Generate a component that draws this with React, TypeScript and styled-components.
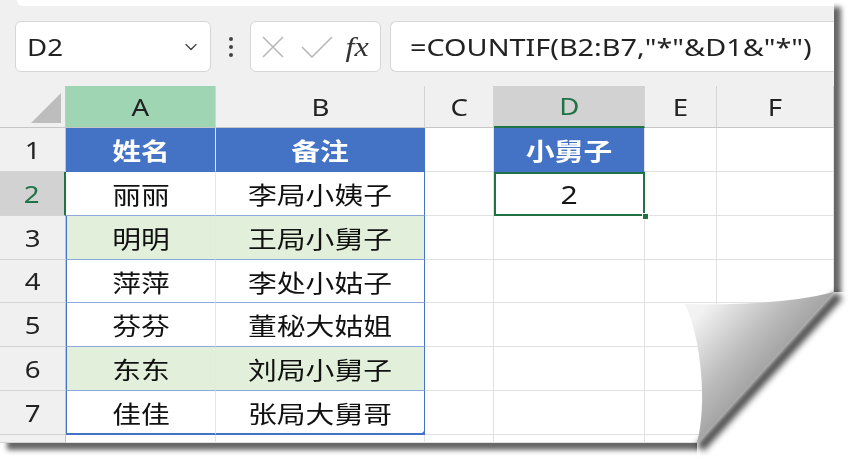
import React from "react";
import styled, { createGlobalStyle } from "styled-components";
import { ChevronDown } from "lucide-react";

const GlobalStyle = createGlobalStyle`
  html, body {
    margin: 0;
    padding: 0;
    background: #fff;
  }
  body {
    font-family: "Noto Sans", "Noto Sans CJK SC", sans-serif;
    color: #1f1f1f;
  }
`;

const green = "#217346";
const blue = "#4472c4";
const grid = "#e1e1e1";

const Page = styled.div`
  position: relative;
  width: 858px;
  height: 467px;
  overflow: hidden;
  background: #fff;
`;

const Sheet = styled.div`
  width: 834px;
  display: flex;
  flex-direction: column;
  background: #fff;
  box-shadow: 7px 7px 5px rgba(0, 0, 0, 0.6);
`;

const Toolbar = styled.div`
  height: 86px;
  background: #f0f0f0;
  display: flex;
  flex-direction: column;
`;

const RibbonEdge = styled.div`
  height: 6px;
  margin-left: 17px;
  background: #fff;
  border-radius: 0 0 0 8px;
`;

const FormulaRow = styled.div`
  display: flex;
  align-items: stretch;
  height: 51px;
  margin-top: 15px;
  padding-left: 15px;
`;

const Box = styled.div`
  box-sizing: border-box;
  background: #fff;
  border: 1px solid #d6d6d6;
  border-radius: 6px;
  display: flex;
  align-items: center;
`;

const NameBox = styled(Box)`
  width: 196px;
  justify-content: space-between;
  padding: 0 9px 0 11px;
  font-size: 23px;
  color: #222;
`;

const Dots = styled.div`
  width: 39px;
  display: flex;
  flex-direction: column;
  align-items: center;
  justify-content: center;
  gap: 4px;
  span {
    width: 4px;
    height: 4px;
    border-radius: 50%;
    background: #444;
  }
`;

const FxBox = styled(Box)`
  width: 131px;
  padding-left: 11px;
`;

const Fx = styled.span`
  font-family: "Liberation Serif", serif;
  font-style: italic;
  font-size: 28px;
  color: #333;
  margin-left: 14px;
  display: inline-block;
  transform: scaleX(1.15);
`;

const FormulaBox = styled(Box)`
  flex: 1;
  margin-left: 9px;
  border-right: none;
  border-radius: 6px 0 0 6px;
  padding-left: 19px;
  font-size: 24px;
  color: #222;
`;

const Wide = styled.span<{ $origin?: string }>`
  display: inline-block;
  white-space: nowrap;
  transform: scaleX(1.2);
  transform-origin: ${(p) => p.$origin ?? "center"};
`;

const Grid = styled.div`
  display: grid;
  grid-template-columns: 66px 150px 209px 69px 151px 72px 117px;
  grid-template-rows: 42px 44px 44px 44px 43px 44px 44px 44px 8px;
`;

const Head = styled.div<{ $bg?: string; $color?: string; $mark?: boolean }>`
  box-sizing: border-box;
  display: flex;
  align-items: center;
  justify-content: center;
  background: ${(p) => p.$bg ?? "#f0f0f0"};
  color: ${(p) => p.$color ?? "#222"};
  font-size: 23px;
  border-right: 1px solid #d4d4d4;
  border-bottom: ${(p) => (p.$mark ? `2px solid ${green}` : "1px solid #c6c6c6")};
`;

const RowHead = styled.div<{ $selected?: boolean }>`
  box-sizing: border-box;
  display: flex;
  align-items: center;
  justify-content: center;
  background: ${(p) => (p.$selected ? "#d2d2d2" : "#f0f0f0")};
  color: ${(p) => (p.$selected ? green : "#222")};
  font-size: 23px;
  border-bottom: 1px solid #d4d4d4;
  border-right: ${(p) => (p.$selected ? `2px solid ${green}` : "1px solid #c6c6c6")};
`;

const Corner = styled.div`
  position: relative;
  background: #f0f0f0;
  border-right: 1px solid #c6c6c6;
  border-bottom: 1px solid #c6c6c6;
  box-sizing: border-box;
  &::after {
    content: "";
    position: absolute;
    right: 4px;
    bottom: 4px;
    width: 30px;
    height: 30px;
    background: #bdbdbd;
    clip-path: polygon(100% 0, 100% 100%, 0 100%);
  }
`;

const Cell = styled.div`
  box-sizing: border-box;
  border-right: 1px solid ${grid};
  border-bottom: 1px solid ${grid};
  background: #fff;
`;

const TableCell = styled.div<{
  $fill?: string;
  $head?: boolean;
  $left?: boolean;
  $right?: boolean;
  $last?: boolean;
}>`
  position: relative;
  box-sizing: border-box;
  display: flex;
  align-items: center;
  justify-content: center;
  font-size: 24px;
  font-family: "Noto Sans CJK SC", "Noto Sans", sans-serif;
  background: ${(p) => (p.$head ? blue : p.$fill ?? "#fff")};
  color: ${(p) => (p.$head ? "#fff" : "#111")};
  font-weight: ${(p) => (p.$head ? 700 : 400)};
  border-left: ${(p) => (p.$left ? `1px solid ${blue}` : "none")};
  border-right: ${(p) => (p.$right ? `1px solid ${blue}` : "1px solid #e6e6e6")};
  border-bottom: ${(p) =>
    p.$head ? `1px solid ${blue}` : p.$last ? `2px solid ${blue}` : "1px solid #8ea9db"};
`;

const ActiveCell = styled.div`
  position: relative;
  box-sizing: border-box;
  display: flex;
  align-items: center;
  justify-content: center;
  font-size: 25px;
  color: #161616;
  box-shadow: inset 0 0 0 2px ${green};
  &::after {
    content: "";
    position: absolute;
    right: -4px;
    bottom: -4px;
    width: 7px;
    height: 7px;
    background: ${green};
    border: 1px solid #fff;
    box-sizing: border-box;
  }
`;

const ResizeMark = styled.span`
  position: absolute;
  right: -1px;
  bottom: -2px;
  width: 5px;
  height: 5px;
  background: ${blue};
  clip-path: polygon(100% 0, 100% 100%, 0 100%);
`;

const Curl = styled.svg`
  position: absolute;
  left: 0;
  top: 0;
  width: 858px;
  height: 467px;
  pointer-events: none;
`;

type Row = { n: number; a: string; b: string; d?: string; fill?: string };

const rows: Row[] = [
  { n: 1, a: "姓名", b: "备注", d: "小舅子" },
  { n: 2, a: "丽丽", b: "李局小姨子", d: "2" },
  { n: 3, a: "明明", b: "王局小舅子", fill: "#e2efda" },
  { n: 4, a: "萍萍", b: "李处小姑子" },
  { n: 5, a: "芬芬", b: "董秘大姑姐" },
  { n: 6, a: "东东", b: "刘局小舅子", fill: "#e2efda" },
  { n: 7, a: "佳佳", b: "张局大舅哥" },
];

export default function App() {
  return (
    <Page>
      <GlobalStyle />
      <Sheet>
        <Toolbar>
          <RibbonEdge />
          <FormulaRow>
            <NameBox>
              <Wide $origin="left">D2</Wide>
              <ChevronDown size={20} strokeWidth={1.6} color="#444" />
            </NameBox>
            <Dots>
              <span />
              <span />
              <span />
            </Dots>
            <FxBox>
              <svg width="22" height="22" viewBox="0 0 22 22">
                <path d="M1 1 L21 21 M21 1 L1 21" stroke="#b8b8b8" strokeWidth="1.6" fill="none" />
              </svg>
              <svg width="32" height="22" viewBox="0 0 32 22" style={{ marginLeft: 17 }}>
                <path d="M1 11 L11 21 L31 1" stroke="#b8b8b8" strokeWidth="1.6" fill="none" />
              </svg>
              <Fx>fx</Fx>
            </FxBox>
            <FormulaBox>
              <Wide $origin="left">=COUNTIF(B2:B7,"*"&amp;D1&amp;"*")</Wide>
            </FormulaBox>
          </FormulaRow>
        </Toolbar>
        <Grid>
          <Corner />
          <Head $bg="#a0d5b4"><Wide>A</Wide></Head>
          <Head><Wide>B</Wide></Head>
          <Head><Wide>C</Wide></Head>
          <Head $bg="#d2d2d2" $color={green} $mark><Wide>D</Wide></Head>
          <Head><Wide>E</Wide></Head>
          <Head><Wide>F</Wide></Head>
          {rows.map((r) => {
            const head = r.n === 1;
            const last = r.n === 7;
            return (
              <React.Fragment key={r.n}>
                <RowHead $selected={r.n === 2}><Wide>{r.n}</Wide></RowHead>
                <TableCell $head={head} $fill={r.fill} $left={r.n > 2} $last={last}>
                  <Wide>{r.a}</Wide>
                </TableCell>
                <TableCell $head={head} $fill={r.fill} $right $last={last}>
                  <Wide>{r.b}</Wide>
                  {last && <ResizeMark />}
                </TableCell>
                <Cell />
                {head ? (
                  <TableCell $head>
                    <Wide>{r.d}</Wide>
                  </TableCell>
                ) : r.n === 2 ? (
                  <ActiveCell>
                    <Wide>{r.d}</Wide>
                  </ActiveCell>
                ) : (
                  <Cell />
                )}
                <Cell />
                <Cell />
              </React.Fragment>
            );
          })}
          <RowHead />
          <Cell />
          <Cell />
          <Cell />
          <Cell />
          <Cell />
          <Cell />
        </Grid>
      </Sheet>
      <Curl viewBox="0 0 858 467">
        <defs>
          <linearGradient id="flap" gradientUnits="userSpaceOnUse" x1="695" y1="318" x2="785" y2="400">
            <stop offset="0" stopColor="#f2f2f2" />
            <stop offset="0.45" stopColor="#bdbdbd" />
            <stop offset="1" stopColor="#888" />
          </linearGradient>
          <filter id="soft" x="-20%" y="-20%" width="140%" height="140%">
            <feGaussianBlur stdDeviation="3" />
          </filter>
        </defs>
        <polygon points="697,443 834,292 858,292 858,467 697,467" fill="#fff" />
        <path d="M700,448 L839,295" stroke="#000" strokeOpacity="0.7" strokeWidth="10" filter="url(#soft)" />
        <path
          d="M685,304 Q780,306 834,292 L697,443 C708,400 700,335 685,304 Z"
          fill="url(#flap)"
        />
      </Curl>
    </Page>
  );
}
